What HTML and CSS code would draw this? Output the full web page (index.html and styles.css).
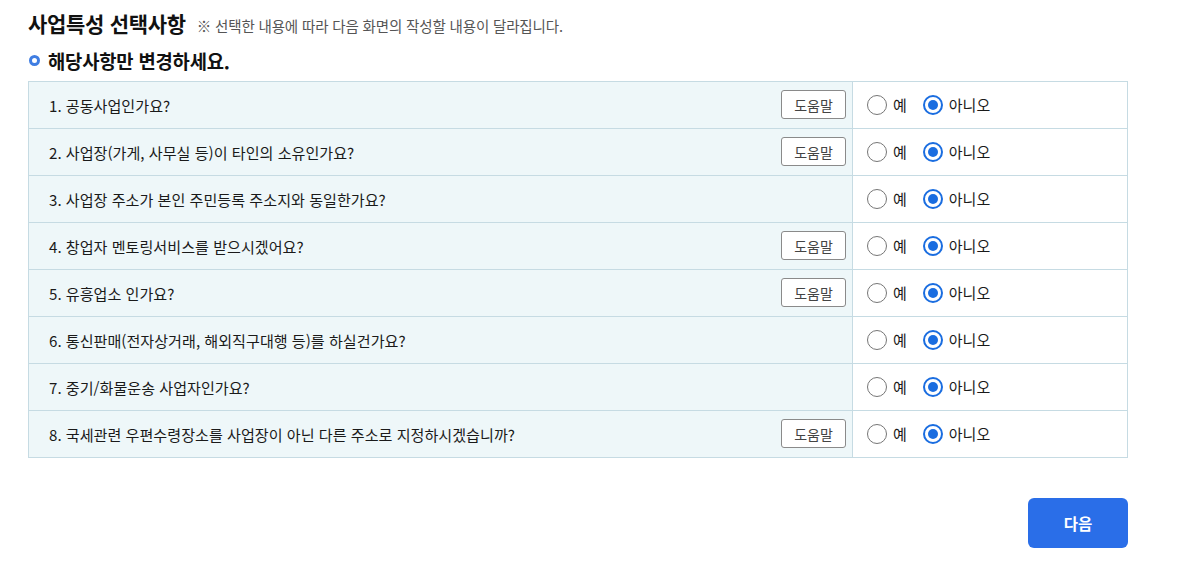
FILE: index.html
```html
<!DOCTYPE html>
<html lang="ko">
<head>
<meta charset="utf-8">
<link rel="stylesheet" href="styles.css">
</head>
<body>
<div class="page">
  <div class="title-row">
    <h1 class="title">사업특성 선택사항</h1>
    <span class="note">※ 선택한 내용에 따라 다음 화면의 작성할 내용이 달라집니다.</span>
  </div>
  <h2 class="sub"><span class="ring"></span>해당사항만 변경하세요.</h2>
  <div class="table">
    <div class="row"><div class="q"><span>1. 공동사업인가요?</span><button class="help">도움말</button></div><div class="a"><label class="opt"><span class="radio"></span>예</label><label class="opt"><span class="radio on"></span>아니오</label></div></div>
    <div class="row"><div class="q"><span>2. 사업장(가게, 사무실 등)이 타인의 소유인가요?</span><button class="help">도움말</button></div><div class="a"><label class="opt"><span class="radio"></span>예</label><label class="opt"><span class="radio on"></span>아니오</label></div></div>
    <div class="row"><div class="q"><span>3. 사업장 주소가 본인 주민등록 주소지와 동일한가요?</span></div><div class="a"><label class="opt"><span class="radio"></span>예</label><label class="opt"><span class="radio on"></span>아니오</label></div></div>
    <div class="row"><div class="q"><span>4. 창업자 멘토링서비스를 받으시겠어요?</span><button class="help">도움말</button></div><div class="a"><label class="opt"><span class="radio"></span>예</label><label class="opt"><span class="radio on"></span>아니오</label></div></div>
    <div class="row"><div class="q"><span>5. 유흥업소 인가요?</span><button class="help">도움말</button></div><div class="a"><label class="opt"><span class="radio"></span>예</label><label class="opt"><span class="radio on"></span>아니오</label></div></div>
    <div class="row"><div class="q"><span>6. 통신판매(전자상거래, 해외직구대행 등)를 하실건가요?</span></div><div class="a"><label class="opt"><span class="radio"></span>예</label><label class="opt"><span class="radio on"></span>아니오</label></div></div>
    <div class="row"><div class="q"><span>7. 중기/화물운송 사업자인가요?</span></div><div class="a"><label class="opt"><span class="radio"></span>예</label><label class="opt"><span class="radio on"></span>아니오</label></div></div>
    <div class="row"><div class="q"><span>8. 국세관련 우편수령장소를 사업장이 아닌 다른 주소로 지정하시겠습니까?</span><button class="help">도움말</button></div><div class="a"><label class="opt"><span class="radio"></span>예</label><label class="opt"><span class="radio on"></span>아니오</label></div></div>
  </div>
  <div class="actions"><button class="next">다음</button></div>
</div>
</body>
</html>
```
FILE: styles.css
```css
* { box-sizing: border-box; }
body {
  margin: 0;
  font-family: "Noto Sans CJK KR", "Noto Sans", sans-serif;
  color: #111;
  background: #fff;
}
.page {
  width: 1100px;
  margin-left: 28px;
  padding-top: 8px;
}
.title-row {
  display: flex;
  align-items: baseline;
  gap: 11px;
  height: 32px;
}
.title {
  margin: 0;
  font-size: 21px;
  font-weight: 700;
  color: #111;
  letter-spacing: -0.3px;
}
.note {
  font-size: 14.5px;
  color: #555;
  letter-spacing: -0.15px;
}
.sub {
  margin: 5px 0 6px;
  display: flex;
  align-items: center;
  font-size: 18.8px;
  font-weight: 700;
  color: #111;
  height: 30px;
  letter-spacing: -0.2px;
}
.ring {
  width: 11px;
  height: 11px;
  border: 3px solid #3f7de2;
  border-radius: 50%;
  margin: 0 8px 0 1px;
}
.table {
  border: 1px solid #c6dbe3;
}
.row {
  display: flex;
  height: 47px;
  border-top: 1px solid #c6dbe3;
}
.row:first-child { border-top: none; height: 46px; }
.q {
  width: 824px;
  background: #eef7f9;
  border-right: 1px solid #c6dbe3;
  display: flex;
  align-items: center;
  justify-content: space-between;
  padding: 0 6px 1px 20px;
  font-size: 15.1px;
  color: #1a1a1a;
}
.help {
  width: 65px;
  height: 29px;
  border: 1px solid #8a8a8a;
  border-radius: 3px;
  background: #fff;
  font-family: inherit;
  font-size: 14px;
  color: #444;
  padding: 0;
}
.a {
  flex: 1;
  display: flex;
  align-items: center;
  padding-left: 14px;
  padding-bottom: 1px;
  gap: 16px;
  font-size: 15px;
  color: #1a1a1a;
}
.opt {
  display: flex;
  align-items: center;
  gap: 6px;
}
.radio {
  width: 20px;
  height: 20px;
  border: 1px solid #767676;
  border-radius: 50%;
  background: #fff;
  display: flex;
  align-items: center;
  justify-content: center;
}
.radio.on {
  border: 2px solid #1a6de0;
}
.radio.on::after {
  content: "";
  width: 10px;
  height: 10px;
  border-radius: 50%;
  background: #1a6de0;
}
.actions {
  display: flex;
  justify-content: flex-end;
  margin-top: 40px;
}
.next {
  width: 100px;
  height: 50px;
  border: none;
  border-radius: 6px;
  background: #2a6ee8;
  color: #fff;
  font-family: inherit;
  font-size: 15.5px;
  font-weight: 700;
}
```
